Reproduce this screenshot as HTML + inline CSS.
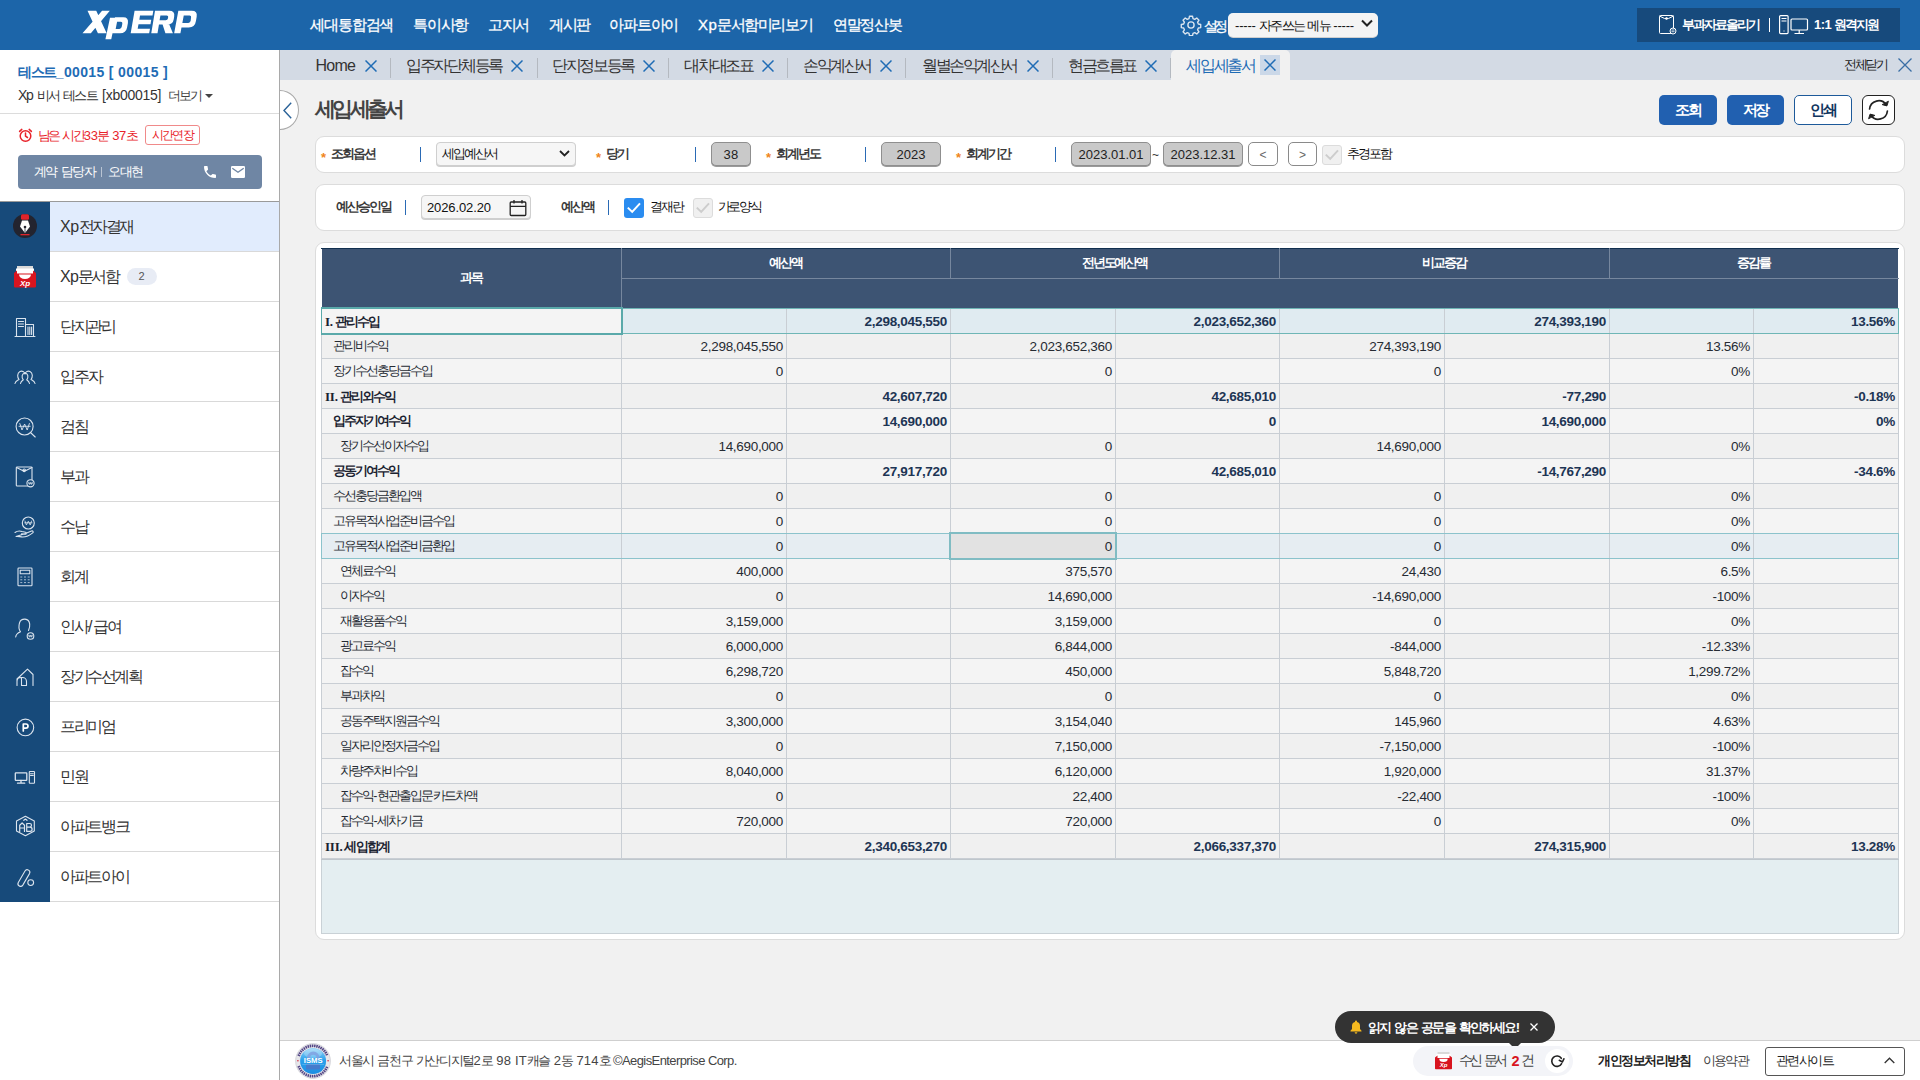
<!DOCTYPE html>
<html lang="ko"><head><meta charset="utf-8"><title>XpERP</title>
<style>
*{box-sizing:border-box;margin:0;padding:0}
html,body{width:1920px;height:1080px;overflow:hidden;background:#f1f1f1;font-family:"Liberation Sans",sans-serif;color:#333}
.a{position:absolute;white-space:nowrap}
.t{position:absolute;white-space:nowrap;line-height:1}
#hdr{left:0;top:0;width:1920px;height:50px;background:#1c65a9}
#tabs{left:280px;top:50px;width:1640px;height:30px;background:#d3dae4}
#side{left:0;top:50px;width:280px;height:1030px;background:#fff;border-right:1px solid #a9a9a9}
#foot{left:280px;top:1040px;width:1640px;height:40px;background:#fff;border-top:1px solid #cfcfcf}
.t{letter-spacing:var(--u,0px)}
.k{letter-spacing:calc(var(--u,0px) - 0.125em)}
.rm{font-family:"Liberation Serif",serif;font-size:1.04em;letter-spacing:-.2px;margin-right:-1.5px}
.hs .k{font-size:.92em}

</style></head>
<body>
<div class="a" id="hdr"></div>
<svg class="a" style="left:70px;top:0" width="160" height="50" viewBox="0 0 1920 600" fill="#fff"><path d="M210 130H315L440 400H335ZM385 130H478L250 400H150Z"/><path d="M480 212H550L495 470H425ZM540 208H640Q705 208 695 275L685 330Q672 400 600 400H500Z"/><path d="M775 130H1000L990 185H840L832 238H975L966 290H822L812 345H960L950 400H728Z"/><path d="M1020 130H1190Q1262 130 1250 200L1245 230Q1235 295 1165 295H1050ZM1020 130H1095L1050 400H975ZM1110 290H1190L1235 400H1145Z"/><path d="M1300 130H1460Q1532 130 1520 200L1512 250Q1500 330 1425 330H1335ZM1300 130H1375L1325 400H1250Z"/><path fill="#1c65a9" d="M565 262H610Q632 262 628 285L620 325Q615 347 592 347H548ZM1085 185H1160Q1182 185 1178 205L1175 222Q1171 242 1148 242H1075ZM1365 185H1435Q1457 185 1453 207L1448 250Q1444 275 1420 275H1348Z"/></svg>
<div class="t nav" style="left:310px;top:17px;font-size:15px;color:#fff;font-weight:normal;--u:0.75px;-webkit-text-stroke:0.3px #fff;"><span class="k">세대통합검색</span></div>
<div class="t nav" style="left:413px;top:17px;font-size:15px;color:#fff;font-weight:normal;--u:0.68px;-webkit-text-stroke:0.3px #fff;"><span class="k">특이사항</span></div>
<div class="t nav" style="left:488px;top:17px;font-size:15px;color:#fff;font-weight:normal;--u:0.60px;-webkit-text-stroke:0.3px #fff;"><span class="k">고지서</span></div>
<div class="t nav" style="left:549px;top:17px;font-size:15px;color:#fff;font-weight:normal;--u:0.60px;-webkit-text-stroke:0.3px #fff;"><span class="k">게시판</span></div>
<div class="t nav" style="left:609px;top:17px;font-size:15px;color:#fff;font-weight:normal;--u:0.72px;-webkit-text-stroke:0.3px #fff;"><span class="k">아파트아이</span></div>
<div class="t nav" style="left:698px;top:17px;font-size:15px;color:#fff;font-weight:normal;--u:0.43px;-webkit-text-stroke:0.3px #fff;">Xp<span class="k">문서함미리보기</span></div>
<div class="t nav" style="left:833px;top:17px;font-size:15px;color:#fff;font-weight:normal;--u:0.51px;-webkit-text-stroke:0.3px #fff;"><span class="k">연말정산봇</span></div>
<svg class="a" style="left:1180px;top:14px" width="22" height="22" viewBox="0 0 24 24" fill="none" stroke="#dbe5f0" stroke-width="1.5" stroke-linejoin="round"><circle cx="12" cy="12" r="3.4"/><path d="M10.3 2.5h3.4l.5 2.6 1.9.8 2.2-1.5 2.4 2.4-1.5 2.2.8 1.9 2.6.5v3.4l-2.6.5-.8 1.9 1.5 2.2-2.4 2.4-2.2-1.5-1.9.8-.5 2.6h-3.4l-.5-2.6-1.9-.8-2.2 1.5-2.4-2.4 1.5-2.2-.8-1.9-2.6-.5v-3.4l2.6-.5.8-1.9-1.5-2.2 2.4-2.4 2.2 1.5 1.9-.8z"/></svg>
<div class="t " style="left:1204px;top:18.5px;font-size:14px;color:#fff;font-weight:normal;--u:-2.65px;-webkit-text-stroke:0.3px #fff;"><span class="k">설정</span></div>
<div class="a" style="left:1228px;top:13px;width:150px;height:24px;background:#f4f4f4;border-radius:5px;box-shadow:0 1px 0 #cfcfcf"></div>
<div class="t " style="left:1235px;top:19px;font-size:13px;color:#111;font-weight:normal;--u:-0.18px;">----- <span class="k">자주쓰는</span> <span class="k">메뉴</span> -----</div>
<svg class="a" style="left:1361px;top:19px" width="12" height="9" viewBox="0 0 12 9" fill="none" stroke="#222" stroke-width="2"><path d="M1 1.5l5 5 5-5"/></svg>
<div class="a" style="left:1637px;top:8px;width:263px;height:34px;background:#174a7c"></div>
<svg class="a" style="left:1659px;top:15px" width="18" height="20" viewBox="0 0 18 20" fill="none" stroke="#fff" stroke-width="1"><rect x=".5" y=".5" width="14" height="18" rx="1"/><path d="M.5 1l5 2.5h4l5-2.5"/><circle cx="7.5" cy="3.5" r="1"/><circle cx="14" cy="16" r="3" fill="#174a7c"/><path d="M12.5 15h3M12.5 16.7h3" stroke-width=".8"/></svg>
<div class="t " style="left:1682px;top:18px;font-size:13px;color:#fff;font-weight:bold;--u:-0.39px;"><span class="k">부과자료올리기</span></div>
<div class="a" style="left:1769px;top:18px;width:1px;height:14px;background:#fff"></div>
<svg class="a" style="left:1779px;top:15px" width="30" height="20" viewBox="0 0 30 20" fill="none" stroke="#fff" stroke-width="1.2"><rect x=".6" y=".6" width="8.5" height="18" rx="1"/><path d="M2.5 3.5h5M2.5 6h5"/><path d="M4.5 16h1"/><rect x="12" y="4" width="16.5" height="11" rx="1"/><path d="M20.2 15v3M15.5 18.5h9.5"/></svg>
<div class="t " style="left:1814px;top:18px;font-size:13px;color:#fff;font-weight:bold;--u:-0.51px;">1:1 <span class="k">원격지원</span></div>
<div class="a" id="side"></div>
<div class="t " style="left:18px;top:65px;font-size:14px;color:#1f6cb5;font-weight:bold;--u:0.35px;"><span class="k">테스트</span>_00015 [ 00015 ]</div>
<div class="t " style="left:18px;top:88px;font-size:14px;color:#333;font-weight:normal;--u:-1.25px;">Xp</div>
<div class="t " style="left:37px;top:88.5px;font-size:13px;color:#333;font-weight:normal;--u:-0.44px;"><span class="k">비서</span></div>
<div class="t " style="left:63.3px;top:88.5px;font-size:13px;color:#333;font-weight:normal;--u:-0.27px;"><span class="k">테스트</span></div>
<div class="t " style="left:102px;top:88px;font-size:14px;color:#333;font-weight:normal;--u:-0.25px;">[xb00015]</div>
<div class="t " style="left:168px;top:88.5px;font-size:13px;color:#444;font-weight:normal;--u:-0.42px;"><span class="k">더보기</span></div>
<div class="a" style="left:205px;top:94px;width:0;height:0;border-left:4px solid transparent;border-right:4px solid transparent;border-top:4px solid #444"></div>
<div class="a" style="left:0;top:113px;width:279px;height:1px;background:#dcdcdc"></div>
<svg class="a" style="left:18px;top:128px" width="15" height="15" viewBox="0 0 15 15" fill="none" stroke="#e8232a" stroke-width="1.5" stroke-linecap="round"><circle cx="7.5" cy="8" r="5.3"/><path d="M7.5 5v3.2l2 1.3M1.6 3.4l2.2-2M13.4 3.4l-2.2-2"/></svg>
<div class="t " style="left:37.5px;top:128.5px;font-size:13px;color:#e8232a;font-weight:normal;--u:-1.03px;"><span class="k">남은</span></div>
<div class="t " style="left:62px;top:128.5px;font-size:13px;color:#e8232a;font-weight:normal;--u:-0.45px;"><span class="k">시간</span>33<span class="k">분</span></div>
<div class="t " style="left:112.3px;top:128.5px;font-size:13px;color:#e8232a;font-weight:normal;--u:-0.42px;">37<span class="k">초</span></div>
<div class="a" style="left:145px;top:125px;width:55px;height:20px;border:1px solid #f08a8a;border-radius:3px;background:#fff"></div>
<div class="t " style="left:152px;top:129px;font-size:12px;color:#e8232a;font-weight:normal;--u:-0.27px;"><span class="k">시간연장</span></div>
<div class="a" style="left:18px;top:155px;width:244px;height:34px;background:#6f86a4;border-radius:4px"></div>
<div class="t " style="left:34px;top:165px;font-size:13px;color:#fff;font-weight:normal;--u:0.09px;"><span class="k">계약</span> <span class="k">담당자</span></div>
<div class="a" style="left:101px;top:167px;width:1px;height:10px;background:#b9c4d3"></div>
<div class="t " style="left:108px;top:165px;font-size:13px;color:#fff;font-weight:normal;--u:0.32px;"><span class="k">오대현</span></div>
<svg class="a" style="left:202px;top:164px" width="16" height="16" viewBox="0 0 24 24" fill="#fff"><path d="M6.6 10.8c1.4 2.8 3.8 5.100 6.600 6.600l2.200-2.200c.3-.3.700-.400 1-.200 1.100.400 2.300.600 3.600.600.600 0 1 .400 1 1V20c0 .600-.400 1-1 1C10.600 21 3 13.400 3 4c0-.600.400-1 1-1h3.500c.600 0 1 .400 1 1 0 1.300.200 2.500.600 3.600.100.300 0 .700-.200 1l-2.300 2.200z"/></svg>
<svg class="a" style="left:231px;top:166px" width="14" height="12" viewBox="0 0 14 12"><rect width="14" height="12" rx="1.3" fill="#fff"/><path d="M1.300 2.200l5.700 4 5.700-4" fill="none" stroke="#6f86a4" stroke-width="1.400"/></svg>
<div class="a" style="left:0;top:201px;width:279px;height:1px;background:#9a9a9a"></div>
<div class="a" style="left:0;top:202px;width:50px;height:700px;background:#174a7a"></div>
<div class="a" style="left:50px;top:202px;width:229px;height:49px;background:#e1ecfd"></div>
<div class="a" style="left:50px;top:251px;width:229px;height:1px;background:#d9d9d9"></div>
<div class="t menu" style="left:60px;top:219px;font-size:16px;color:#333;font-weight:normal;--u:-0.45px;">Xp<span class="k">전자결재</span></div>
<div class="a" style="left:50px;top:301px;width:229px;height:1px;background:#d9d9d9"></div>
<div class="t menu" style="left:60px;top:269px;font-size:16px;color:#333;font-weight:normal;--u:-0.76px;">Xp<span class="k">문서함</span></div>
<div class="a" style="left:50px;top:351px;width:229px;height:1px;background:#d9d9d9"></div>
<div class="t menu" style="left:60px;top:319px;font-size:16px;color:#333;font-weight:normal;--u:-0.41px;"><span class="k">단지관리</span></div>
<div class="a" style="left:50px;top:401px;width:229px;height:1px;background:#d9d9d9"></div>
<div class="t menu" style="left:60px;top:369px;font-size:16px;color:#333;font-weight:normal;--u:-0.19px;"><span class="k">입주자</span></div>
<div class="a" style="left:50px;top:451px;width:229px;height:1px;background:#d9d9d9"></div>
<div class="t menu" style="left:60px;top:419px;font-size:16px;color:#333;font-weight:normal;--u:-0.29px;"><span class="k">검침</span></div>
<div class="a" style="left:50px;top:501px;width:229px;height:1px;background:#d9d9d9"></div>
<div class="t menu" style="left:60px;top:469px;font-size:16px;color:#333;font-weight:normal;--u:-0.29px;"><span class="k">부과</span></div>
<div class="a" style="left:50px;top:551px;width:229px;height:1px;background:#d9d9d9"></div>
<div class="t menu" style="left:60px;top:519px;font-size:16px;color:#333;font-weight:normal;--u:-0.29px;"><span class="k">수납</span></div>
<div class="a" style="left:50px;top:601px;width:229px;height:1px;background:#d9d9d9"></div>
<div class="t menu" style="left:60px;top:569px;font-size:16px;color:#333;font-weight:normal;--u:-0.29px;"><span class="k">회계</span></div>
<div class="a" style="left:50px;top:651px;width:229px;height:1px;background:#d9d9d9"></div>
<div class="t menu" style="left:60px;top:619px;font-size:16px;color:#333;font-weight:normal;--u:0.01px;"><span class="k">인사</span>/<span class="k">급여</span></div>
<div class="a" style="left:50px;top:701px;width:229px;height:1px;background:#d9d9d9"></div>
<div class="t menu" style="left:60px;top:669px;font-size:16px;color:#333;font-weight:normal;--u:-0.44px;"><span class="k">장기수선계획</span></div>
<div class="a" style="left:50px;top:751px;width:229px;height:1px;background:#d9d9d9"></div>
<div class="t menu" style="left:60px;top:719px;font-size:16px;color:#333;font-weight:normal;--u:-0.35px;"><span class="k">프리미엄</span></div>
<div class="a" style="left:50px;top:801px;width:229px;height:1px;background:#d9d9d9"></div>
<div class="t menu" style="left:60px;top:769px;font-size:16px;color:#333;font-weight:normal;--u:-0.29px;"><span class="k">민원</span></div>
<div class="a" style="left:50px;top:851px;width:229px;height:1px;background:#d9d9d9"></div>
<div class="t menu" style="left:60px;top:819px;font-size:16px;color:#333;font-weight:normal;--u:-0.34px;"><span class="k">아파트뱅크</span></div>
<div class="a" style="left:50px;top:901px;width:229px;height:1px;background:#d9d9d9"></div>
<div class="t menu" style="left:60px;top:869px;font-size:16px;color:#333;font-weight:normal;--u:-0.34px;"><span class="k">아파트아이</span></div>
<div class="a" style="left:127px;top:268px;width:30px;height:17px;border-radius:9px;background:#e8ecf5"></div>
<div class="t " style="left:138.5px;top:271px;font-size:11px;color:#555;font-weight:normal;">2</div>
<svg class="a" style="left:0;top:202px" width="50" height="50" viewBox="0 0 50 50" fill="none" stroke="#dbe4ee" stroke-width="1.1" stroke-linecap="round" stroke-linejoin="round"><circle cx="25" cy="24" r="12" fill="#23242f" stroke="none"/><rect x="21" y="12.300" width="8" height="5.500" rx="1.500" fill="#e0242b" stroke="none"/><path d="M22 18.500h6l2 6-5 6.500-5-6.500z" fill="#fff" stroke="none"/><circle cx="25" cy="25" r="1.300" fill="#23242f" stroke="none"/><path d="M25 26v4" stroke="#23242f" stroke-width=".8"/><rect x="20.500" y="32" width="9" height="1.300" fill="#e0242b" stroke="none"/></svg>
<svg class="a" style="left:0;top:252px" width="50" height="50" viewBox="0 0 50 50" fill="none" stroke="#dbe4ee" stroke-width="1.1" stroke-linecap="round" stroke-linejoin="round"><rect x="17" y="14" width="16" height="6" fill="#d9d9d9" stroke="none"/><rect x="16" y="16.500" width="18" height="6" fill="#fff" stroke="none"/><path d="M14 21l3-2.500v3h16v-3l3 2.500v13.500a1 1 0 0 1-1 1h-20a1 1 0 0 1-1-1z" fill="#d8141f" stroke="none"/><path d="M19 22.500h12a6 4.500 0 0 1-12 0z" fill="#fff" stroke="none"/><text x="25" y="33.800" font-family="Liberation Sans,sans-serif" font-size="8" font-weight="bold" font-style="italic" fill="#fff" stroke="none" text-anchor="middle">Xp</text></svg>
<svg class="a" style="left:0;top:302px" width="50" height="50" viewBox="0 0 50 50" fill="none" stroke="#dbe4ee" stroke-width="1.1" stroke-linecap="round" stroke-linejoin="round"><path d="M15 34.500h20M16.500 34.500v-18h9v18M25.500 22.500h8v12M18.500 19.500h5M18.500 22h5M18.500 24.500h5M28 25v7.500M29.800 25v7.500M31.600 25v7.500"/></svg>
<svg class="a" style="left:0;top:352px" width="50" height="50" viewBox="0 0 50 50" fill="none" stroke="#dbe4ee" stroke-width="1.1" stroke-linecap="round" stroke-linejoin="round"><path d="M15 31.500c.5-2.500 2.500-3 4-4-1.800-2-2-6.500 1-8 2-1 4.500 0 5 2.500M35 31.500c-.5-2.500-2.500-3-4-4 1.800-2 2-6.500-1-8-2-1-4.500 0-5 2.500M20.500 31.500c.4-2 1.500-2.700 2.800-3.700-2-2.500-1.600-6.300 1.700-6.800 3.300.5 3.700 4.300 1.700 6.800 1.300 1 2.400 1.700 2.800 3.700"/></svg>
<svg class="a" style="left:0;top:402px" width="50" height="50" viewBox="0 0 50 50" fill="none" stroke="#dbe4ee" stroke-width="1.1" stroke-linecap="round" stroke-linejoin="round"><circle cx="24.600" cy="24.500" r="8.500"/><path d="M31 31l4.200 4"/><path d="M19.800 21.500l2.200 6.500 2.600-6 2.600 6 2.200-6.500M19 24.300h11.200" stroke-width=".9"/></svg>
<svg class="a" style="left:0;top:452px" width="50" height="50" viewBox="0 0 50 50" fill="none" stroke="#dbe4ee" stroke-width="1.1" stroke-linecap="round" stroke-linejoin="round"><rect x="16.300" y="15" width="15.700" height="19" rx=".8"/><path d="M16.500 15.500l6 3h3.500l6-3"/><circle cx="24.200" cy="18.300" r="1.300"/><circle cx="30.500" cy="31.300" r="3.600" fill="#174a7a"/><path d="M28.700 30.200l.9 2.300.9-2 .9 2 .9-2.300M28.500 31.200h4" stroke-width=".7"/></svg>
<svg class="a" style="left:0;top:502px" width="50" height="50" viewBox="0 0 50 50" fill="none" stroke="#dbe4ee" stroke-width="1.1" stroke-linecap="round" stroke-linejoin="round"><circle cx="28.300" cy="21" r="6"/><path d="M25 19l1.400 4 1.900-3.800 1.900 3.800 1.400-4M24.600 20.800h7.400" stroke-width=".8"/><path d="M15 30.500c2-1.500 4.500-2 7-1l3.500.8c1.200.3 1 1.900-.3 1.800l-3.700-.3M25.500 31.500l6-2.500c1.500-.5 2.300 1 1.200 1.900-3 2.500-6.500 4.100-10 4.100-2.500 0-4.500-1-6.700-.500z"/></svg>
<svg class="a" style="left:0;top:552px" width="50" height="50" viewBox="0 0 50 50" fill="none" stroke="#dbe4ee" stroke-width="1.1" stroke-linecap="round" stroke-linejoin="round"><rect x="18" y="16" width="14" height="17.700" rx=".8"/><rect x="20.200" y="18.300" width="9.600" height="3.400"/><path d="M20.700 25h1.200M24.400 25h1.200M28.100 25h1.200M20.700 27.800h1.200M24.400 27.800h1.200M28.100 27.800h1.200M20.700 30.600h1.200M24.400 30.600h1.200M28.100 30.600h1.200" stroke-width="1" opacity=".75"/></svg>
<svg class="a" style="left:0;top:602px" width="50" height="50" viewBox="0 0 50 50" fill="none" stroke="#dbe4ee" stroke-width="1.1" stroke-linecap="round" stroke-linejoin="round"><path d="M15.700 35c.3-3 2-4 4.800-5.200-1.600-2.200-2-5.500-1-9 .8-2.500 3.200-3.800 5.500-3.700 2.800.2 4.400 2.200 4.700 5 .2 2.200-.2 4.400-1.200 6.400"/><circle cx="30.500" cy="34" r="3.300" fill="#174a7a"/><path d="M28.800 33l.8 2.200.9-1.900.9 1.900.8-2.200M28.600 33.900h3.800" stroke-width=".7"/></svg>
<svg class="a" style="left:0;top:652px" width="50" height="50" viewBox="0 0 50 50" fill="none" stroke="#dbe4ee" stroke-width="1.1" stroke-linecap="round" stroke-linejoin="round"><path d="M17 33.500v-6.500l10.500-9.800 5.500 5.300v11M17 33.500v-4a4 4 0 0 1 4-4h1.500a4 4 0 0 1 4 4v4h-5v-7.500" /></svg>
<svg class="a" style="left:0;top:702px" width="50" height="50" viewBox="0 0 50 50" fill="none" stroke="#dbe4ee" stroke-width="1.1" stroke-linecap="round" stroke-linejoin="round"><circle cx="25.400" cy="25.400" r="8.300"/><path d="M23.300 29v-7h2.600a2.100 2.100 0 0 1 0 4.200h-2.600" stroke-width="1.700" stroke="#fff"/></svg>
<svg class="a" style="left:0;top:752px" width="50" height="50" viewBox="0 0 50 50" fill="none" stroke="#dbe4ee" stroke-width="1.1" stroke-linecap="round" stroke-linejoin="round"><rect x="15.300" y="20.800" width="11.500" height="7.600" rx=".6" stroke-width="1.300"/><path d="M21 28.500v2.300M17.500 31.200h7.200" stroke-width="1.300"/><rect x="29.300" y="19.500" width="5.200" height="11.800" rx=".6"/><path d="M30.500 21.700h2.800M30.500 23.500h2.800"/></svg>
<svg class="a" style="left:0;top:802px" width="50" height="50" viewBox="0 0 50 50" fill="none" stroke="#dbe4ee" stroke-width="1.1" stroke-linecap="round" stroke-linejoin="round"><path d="M25.400 14.200l8.900 4.900v9.800l-8.900 4.900-8.900-4.900v-9.800z"/><path d="M19.700 29.500v-6.300l2.400-2.200 2.400 2.200v6.300M19.700 26h4.800M26.700 21.500h3a1.700 1.700 0 0 1 0 3.600h-3zM26.700 25.100h3.300a2 2 0 0 1 0 4.200h-3.300zM26.700 21.500v7.800M23.800 18.300l1.600-1.300 1.600 1.300" stroke-width="1.200"/></svg>
<svg class="a" style="left:0;top:852px" width="50" height="50" viewBox="0 0 50 50" fill="none" stroke="#dbe4ee" stroke-width="1.1" stroke-linecap="round" stroke-linejoin="round"><path d="M25 19l-6.700 11.500a2.600 2.600 0 0 0 4.500 2.600l6.700-11.500a2.600 2.600 0 0 0-4.500-2.600z"/><circle cx="30.700" cy="30.600" r="2.900"/></svg>
<div class="a" id="tabs"></div>
<div class="t tab" style="left:315.5px;top:57.5px;font-size:16px;color:#333;font-weight:normal;--u:-0.73px;">Home</div>
<svg class="a" style="left:365px;top:60px" width="12" height="12" viewBox="0 0 12 12" fill="none" stroke="#1f6cb5" stroke-width="1.5"><path d="M.5 .5L11.5 11.5M11.5 .5L.5 11.5"/></svg>
<div class="a" style="left:390px;top:58px;width:1px;height:20px;background:#b4b9c0"></div>
<div class="t tab" style="left:406px;top:57.5px;font-size:16px;color:#333;font-weight:normal;--u:-0.30px;"><span class="k">입주자단체등록</span></div>
<svg class="a" style="left:511px;top:60px" width="12" height="12" viewBox="0 0 12 12" fill="none" stroke="#1f6cb5" stroke-width="1.5"><path d="M.5 .5L11.5 11.5M11.5 .5L.5 11.5"/></svg>
<div class="a" style="left:537px;top:58px;width:1px;height:20px;background:#b4b9c0"></div>
<div class="t tab" style="left:552px;top:57.5px;font-size:16px;color:#333;font-weight:normal;--u:-0.35px;"><span class="k">단지정보등록</span></div>
<svg class="a" style="left:643px;top:60px" width="12" height="12" viewBox="0 0 12 12" fill="none" stroke="#1f6cb5" stroke-width="1.5"><path d="M.5 .5L11.5 11.5M11.5 .5L.5 11.5"/></svg>
<div class="a" style="left:668px;top:58px;width:1px;height:20px;background:#b4b9c0"></div>
<div class="t tab" style="left:684px;top:57.5px;font-size:16px;color:#333;font-weight:normal;--u:-0.21px;"><span class="k">대차대조표</span></div>
<svg class="a" style="left:762px;top:60px" width="12" height="12" viewBox="0 0 12 12" fill="none" stroke="#1f6cb5" stroke-width="1.5"><path d="M.5 .5L11.5 11.5M11.5 .5L.5 11.5"/></svg>
<div class="a" style="left:787px;top:58px;width:1px;height:20px;background:#b4b9c0"></div>
<div class="t tab" style="left:803px;top:57.5px;font-size:16px;color:#333;font-weight:normal;--u:-0.43px;"><span class="k">손익계산서</span></div>
<svg class="a" style="left:880px;top:60px" width="12" height="12" viewBox="0 0 12 12" fill="none" stroke="#1f6cb5" stroke-width="1.5"><path d="M.5 .5L11.5 11.5M11.5 .5L.5 11.5"/></svg>
<div class="a" style="left:905px;top:58px;width:1px;height:20px;background:#b4b9c0"></div>
<div class="t tab" style="left:922px;top:57.5px;font-size:16px;color:#333;font-weight:normal;--u:-0.45px;"><span class="k">월별손익계산서</span></div>
<svg class="a" style="left:1027px;top:60px" width="12" height="12" viewBox="0 0 12 12" fill="none" stroke="#1f6cb5" stroke-width="1.5"><path d="M.5 .5L11.5 11.5M11.5 .5L.5 11.5"/></svg>
<div class="a" style="left:1052px;top:58px;width:1px;height:20px;background:#b4b9c0"></div>
<div class="t tab" style="left:1068px;top:57.5px;font-size:16px;color:#333;font-weight:normal;--u:-0.43px;"><span class="k">현금흐름표</span></div>
<svg class="a" style="left:1145px;top:60px" width="12" height="12" viewBox="0 0 12 12" fill="none" stroke="#1f6cb5" stroke-width="1.5"><path d="M.5 .5L11.5 11.5M11.5 .5L.5 11.5"/></svg>
<div class="a" style="left:1171px;top:50px;width:119px;height:30px;background:#f1f1f1;border-radius:5px 5px 0 0"></div>
<div class="a" style="left:1170px;top:58px;width:1px;height:20px;background:#b4b9c0"></div>
<div class="t tab" style="left:1186px;top:57.5px;font-size:16px;color:#1f6cb5;font-weight:normal;--u:-0.21px;"><span class="k">세입세출서</span></div>
<div class="a" style="left:1260px;top:55px;width:20px;height:20px;background:#cbd8e8"></div>
<svg class="a" style="left:1264px;top:59px" width="12" height="12" viewBox="0 0 12 12" fill="none" stroke="#1f6cb5" stroke-width="1.5"><path d="M.5 .5L11.5 11.5M11.5 .5L.5 11.5"/></svg>
<div class="t " style="left:1844px;top:58px;font-size:13px;color:#222;font-weight:normal;--u:-0.68px;"><span class="k">전체닫기</span></div>
<svg class="a" style="left:1898px;top:58px" width="14" height="14" viewBox="0 0 14 14" fill="none" stroke="#3a6ea5" stroke-width="1.3"><path d="M.5 .5L13.5 13.5M13.5 .5L.5 13.5"/></svg>
<div class="a" style="left:261px;top:90px;width:38px;height:40px;overflow:hidden;clip-path:inset(0 0 0 19px)"><div style="position:absolute;left:0;top:0;width:38px;height:40px;border-radius:50%;background:#fff;border:1px solid #a9a9a9"></div></div>
<svg class="a" style="left:282.500px;top:101.500px" width="9" height="17" viewBox="0 0 9 17" fill="none" stroke="#2a6298" stroke-width="1.400"><path d="M8.200 .800L1 8.500l7.200 7.700"/></svg>
<div class="t title" style="left:315px;top:98px;font-size:21px;color:#444;font-weight:bold;--u:-1.04px;"><span class="k">세입세출서</span></div>
<div class="a" style="left:1659px;top:95px;width:58px;height:30px;background:#2160b0;border-radius:5px"></div>
<div class="t " style="left:1688px;transform:translateX(-50%);top:102px;font-size:15px;color:#fff;font-weight:bold;--u:-0.15px;"><span class="k">조회</span></div>
<div class="a" style="left:1727px;top:95px;width:57px;height:30px;background:#2160b0;border-radius:5px"></div>
<div class="t " style="left:1755.5px;transform:translateX(-50%);top:102px;font-size:15px;color:#fff;font-weight:bold;--u:-0.15px;"><span class="k">저장</span></div>
<div class="a" style="left:1794px;top:95px;width:58px;height:30px;background:#fff;border:1px solid #1d5a9a;border-radius:5px"></div>
<div class="t " style="left:1823px;transform:translateX(-50%);top:102px;font-size:15px;color:#12365f;font-weight:bold;--u:-0.15px;"><span class="k">인쇄</span></div>
<div class="a" style="left:1862px;top:95px;width:33px;height:30px;background:#fff;border:1px solid #222;border-radius:6px"></div>
<svg class="a" style="left:1866px;top:98px" width="25" height="24" viewBox="0 0 25 24" fill="none" stroke="#222" stroke-width="1.700" stroke-linecap="round" stroke-linejoin="round"><path d="M3.600 11a9.100 9.100 0 0 1 16.600-4.200M21.400 13a9.100 9.100 0 0 1-16.600 4.200"/><path d="M22.300 3.600l-1.400 4.300-4.400-1.200z" fill="#222" stroke-width="1"/><path d="M2.700 20.400l1.400-4.300 4.400 1.200z" fill="#222" stroke-width="1"/></svg>
<div class="a" style="left:315px;top:136px;width:1590px;height:37px;background:#fff;border:1px solid #dcdcdc;border-radius:9px"></div>
<div class="t " style="left:321px;top:151px;font-size:13px;color:#f08519;font-weight:bold;">*</div>
<div class="t " style="left:331px;top:148px;font-size:12.5px;color:#3a3a3a;font-weight:bold;--u:-0.47px;"><span class="k">조회옵션</span></div>
<div class="a" style="left:420px;top:147px;width:1.200px;height:15px;background:#2a6ab5"></div>
<div class="a" style="left:436px;top:142px;width:140px;height:24px;background:#f6f6f6;border:1px solid #cfcfcf;border-radius:4px;box-shadow:0 1px 0 #cfcfcf"></div>
<div class="t " style="left:442px;top:148px;font-size:12.5px;color:#111;font-weight:normal;--u:-0.47px;"><span class="k">세입예산서</span></div>
<svg class="a" style="left:559px;top:150px" width="11" height="8" viewBox="0 0 11 8" fill="none" stroke="#222" stroke-width="1.8"><path d="M1 1l4.500 4.500L10 1"/></svg>
<div class="t " style="left:596px;top:151px;font-size:13px;color:#f08519;font-weight:bold;">*</div>
<div class="t " style="left:606px;top:148px;font-size:12.5px;color:#3a3a3a;font-weight:bold;--u:-0.51px;"><span class="k">당기</span></div>
<div class="a" style="left:695px;top:147px;width:1.200px;height:15px;background:#2a6ab5"></div>
<div class="a" style="left:711px;top:142px;width:40px;height:24px;background:#c9c9c9;border:1px solid #8f8f8f;border-radius:5px;box-shadow:0 1px 0 #9a9a9a"></div>
<div class="t " style="left:731px;transform:translateX(-50%);top:147.5px;font-size:13px;color:#222;font-weight:normal;--u:0.31px;">38</div>
<div class="t " style="left:766px;top:151px;font-size:13px;color:#f08519;font-weight:bold;">*</div>
<div class="t " style="left:776px;top:148px;font-size:12.5px;color:#3a3a3a;font-weight:bold;--u:-0.47px;"><span class="k">회계년도</span></div>
<div class="a" style="left:865px;top:147px;width:1.200px;height:15px;background:#2a6ab5"></div>
<div class="a" style="left:881px;top:142px;width:60px;height:24px;background:#c9c9c9;border:1px solid #8f8f8f;border-radius:5px;box-shadow:0 1px 0 #9a9a9a"></div>
<div class="t " style="left:911px;transform:translateX(-50%);top:147.5px;font-size:13px;color:#222;font-weight:normal;--u:0.02px;">2023</div>
<div class="t " style="left:956px;top:151px;font-size:13px;color:#f08519;font-weight:bold;">*</div>
<div class="t " style="left:966px;top:148px;font-size:12.5px;color:#3a3a3a;font-weight:bold;--u:-0.47px;"><span class="k">회계기간</span></div>
<div class="a" style="left:1055px;top:147px;width:1.200px;height:15px;background:#2a6ab5"></div>
<div class="a" style="left:1071px;top:142px;width:80px;height:24px;background:#c9c9c9;border:1px solid #8f8f8f;border-radius:5px;box-shadow:0 1px 0 #9a9a9a"></div>
<div class="t " style="left:1111px;transform:translateX(-50%);top:147.5px;font-size:13px;color:#222;font-weight:normal;--u:-0.01px;">2023.01.01</div>
<div class="t " style="left:1152px;top:149px;font-size:12px;color:#333;font-weight:normal;">~</div>
<div class="a" style="left:1163px;top:142px;width:80px;height:24px;background:#c9c9c9;border:1px solid #8f8f8f;border-radius:5px;box-shadow:0 1px 0 #9a9a9a"></div>
<div class="t " style="left:1203px;transform:translateX(-50%);top:147.5px;font-size:13px;color:#222;font-weight:normal;--u:-0.01px;">2023.12.31</div>
<div class="a" style="left:1248px;top:142px;width:30px;height:24px;background:#fff;border:1px solid #8a8a8a;border-radius:5px"></div>
<div class="t " style="left:1263px;transform:translateX(-50%);top:149px;font-size:12px;color:#666;font-weight:normal;">&lt;</div>
<div class="a" style="left:1288px;top:142px;width:29px;height:24px;background:#fff;border:1px solid #8a8a8a;border-radius:5px"></div>
<div class="t " style="left:1302.5px;transform:translateX(-50%);top:149px;font-size:12px;color:#666;font-weight:normal;">&gt;</div>
<div class="a" style="left:1322px;top:145px;width:20px;height:20px;background:#f0f0f0;border:1px solid #dcdcdc;border-radius:3px"></div>
<svg class="a" style="left:1322px;top:145px" width="20" height="20" viewBox="0 0 20 20" fill="none" stroke="#cdcdcd" stroke-width="2"><path d="M3.800 9.600l4.400 4.300 7.800-8.600"/></svg>
<div class="t " style="left:1347px;top:148px;font-size:12.5px;color:#111;font-weight:normal;--u:-0.47px;"><span class="k">추경포함</span></div>
<div class="a" style="left:315px;top:184px;width:1590px;height:47px;background:#fff;border:1px solid #dcdcdc;border-radius:9px"></div>
<div class="t " style="left:336px;top:201px;font-size:12.5px;color:#3a3a3a;font-weight:bold;--u:-0.47px;"><span class="k">예산승인일</span></div>
<div class="a" style="left:405px;top:200px;width:1.200px;height:15px;background:#2a6ab5"></div>
<div class="a" style="left:421px;top:195px;width:110px;height:24px;background:#f6f6f6;border:1px solid #cfcfcf;border-radius:4px;box-shadow:0 1px 0 #cfcfcf"></div>
<div class="t " style="left:427px;top:201px;font-size:13px;color:#111;font-weight:normal;--u:-0.11px;">2026.02.20</div>
<svg class="a" style="left:509px;top:199px" width="18" height="18" viewBox="0 0 18 18" fill="none" stroke="#222" stroke-width="1.300"><rect x="1.200" y="3" width="15.600" height="13.500" rx="1"/><path d="M1.200 7.300h15.600M5 1v3.500M13 1v3.500"/></svg>
<div class="t " style="left:561px;top:201px;font-size:12.5px;color:#3a3a3a;font-weight:bold;--u:-0.49px;"><span class="k">예산액</span></div>
<div class="a" style="left:608px;top:200px;width:1.200px;height:15px;background:#2a6ab5"></div>
<div class="a" style="left:624px;top:198px;width:20px;height:20px;background:#2a8cf0;border-radius:3px"></div>
<svg class="a" style="left:624px;top:198px" width="20" height="20" viewBox="0 0 20 20" fill="none" stroke="#fff" stroke-width="2"><path d="M3.800 9.600l4.400 4.300 7.800-8.600"/></svg>
<div class="t " style="left:650px;top:201px;font-size:12.5px;color:#111;font-weight:normal;--u:-0.49px;"><span class="k">결재란</span></div>
<div class="a" style="left:693px;top:198px;width:20px;height:20px;background:#f0f0f0;border:1px solid #dcdcdc;border-radius:3px"></div>
<svg class="a" style="left:693px;top:198px" width="20" height="20" viewBox="0 0 20 20" fill="none" stroke="#cdcdcd" stroke-width="2"><path d="M3.800 9.600l4.400 4.300 7.800-8.600"/></svg>
<div class="t " style="left:717.5px;top:201px;font-size:12.5px;color:#111;font-weight:normal;--u:-0.47px;"><span class="k">가로양식</span></div>
<div class="a" style="left:315px;top:242px;width:1590px;height:698px;background:#fff;border:1px solid #dcdcdc;border-radius:9px"></div>
<div class="a" style="left:321px;top:308px;width:1578px;height:550px;background:repeating-linear-gradient(#f4f4f4 0,#f4f4f4 25px,#f0f0f0 25px,#f0f0f0 50px)"></div>
<div class="a" style="left:621px;top:308px;width:1278px;height:25px;background:#e0ebf1"></div>
<div class="a" style="left:321px;top:533px;width:1578px;height:26px;background:#e6edf2"></div>
<div class="a" style="left:950px;top:533px;width:165px;height:25px;background:#e2e2e2"></div>
<div class="a" style="left:321px;top:858px;width:1578px;height:76px;background:#e4eef1;border:1px solid #c9d1d6;border-top:none"></div>
<div class="a" style="left:321px;top:333px;width:1578px;height:1px;background:#c9ced4"></div><div class="a" style="left:321px;top:358px;width:1578px;height:1px;background:#c9ced4"></div><div class="a" style="left:321px;top:383px;width:1578px;height:1px;background:#c9ced4"></div><div class="a" style="left:321px;top:408px;width:1578px;height:1px;background:#c9ced4"></div><div class="a" style="left:321px;top:433px;width:1578px;height:1px;background:#c9ced4"></div><div class="a" style="left:321px;top:458px;width:1578px;height:1px;background:#c9ced4"></div><div class="a" style="left:321px;top:483px;width:1578px;height:1px;background:#c9ced4"></div><div class="a" style="left:321px;top:508px;width:1578px;height:1px;background:#c9ced4"></div><div class="a" style="left:321px;top:533px;width:1578px;height:1px;background:#c9ced4"></div><div class="a" style="left:321px;top:558px;width:1578px;height:1px;background:#c9ced4"></div><div class="a" style="left:321px;top:583px;width:1578px;height:1px;background:#c9ced4"></div><div class="a" style="left:321px;top:608px;width:1578px;height:1px;background:#c9ced4"></div><div class="a" style="left:321px;top:633px;width:1578px;height:1px;background:#c9ced4"></div><div class="a" style="left:321px;top:658px;width:1578px;height:1px;background:#c9ced4"></div><div class="a" style="left:321px;top:683px;width:1578px;height:1px;background:#c9ced4"></div><div class="a" style="left:321px;top:708px;width:1578px;height:1px;background:#c9ced4"></div><div class="a" style="left:321px;top:733px;width:1578px;height:1px;background:#c9ced4"></div><div class="a" style="left:321px;top:758px;width:1578px;height:1px;background:#c9ced4"></div><div class="a" style="left:321px;top:783px;width:1578px;height:1px;background:#c9ced4"></div><div class="a" style="left:321px;top:808px;width:1578px;height:1px;background:#c9ced4"></div><div class="a" style="left:321px;top:833px;width:1578px;height:1px;background:#c9ced4"></div><div class="a" style="left:321px;top:858px;width:1578px;height:1px;background:#c9ced4"></div>
<div class="a" style="left:321px;top:859px;width:1578px;height:1px;background:#bfc6cc"></div>
<div class="a" style="left:321px;top:308px;width:1px;height:550px;background:#c9ced4"></div>
<div class="a" style="left:621px;top:308px;width:1px;height:550px;background:#c9ced4"></div>
<div class="a" style="left:786px;top:308px;width:1px;height:550px;background:#c9ced4"></div>
<div class="a" style="left:950px;top:308px;width:1px;height:550px;background:#c9ced4"></div>
<div class="a" style="left:1115px;top:308px;width:1px;height:550px;background:#c9ced4"></div>
<div class="a" style="left:1279px;top:308px;width:1px;height:550px;background:#c9ced4"></div>
<div class="a" style="left:1444px;top:308px;width:1px;height:550px;background:#c9ced4"></div>
<div class="a" style="left:1609px;top:308px;width:1px;height:550px;background:#c9ced4"></div>
<div class="a" style="left:1753px;top:308px;width:1px;height:550px;background:#c9ced4"></div>
<div class="a" style="left:1898px;top:308px;width:1px;height:550px;background:#c9ced4"></div>
<div class="a" style="left:322px;top:249px;width:1576px;height:59px;background:#3d5473"></div>
<div class="a" style="left:321px;top:248px;width:1578px;height:1px;background:#12304f"></div>
<div class="a" style="left:621px;top:278px;width:1278px;height:1px;background:#76879e"></div>
<div class="a" style="left:621px;top:248px;width:1px;height:60px;background:#76879e"></div>
<div class="a" style="left:950px;top:248px;width:1px;height:30px;background:#76879e"></div>
<div class="a" style="left:1279px;top:248px;width:1px;height:30px;background:#76879e"></div>
<div class="a" style="left:1609px;top:248px;width:1px;height:30px;background:#76879e"></div>
<div class="t " style="left:471px;transform:translateX(-50%);top:272px;font-size:12.5px;color:#fff;font-weight:bold;--u:-0.51px;"><span class="k">과목</span></div>
<div class="t " style="left:785.5px;transform:translateX(-50%);top:257px;font-size:12.5px;color:#fff;font-weight:bold;--u:-0.49px;"><span class="k">예산액</span></div>
<div class="t " style="left:1114.5px;transform:translateX(-50%);top:257px;font-size:12.5px;color:#fff;font-weight:bold;--u:-0.46px;"><span class="k">전년도예산액</span></div>
<div class="t " style="left:1444px;transform:translateX(-50%);top:257px;font-size:12.5px;color:#fff;font-weight:bold;--u:-0.47px;"><span class="k">비교증감</span></div>
<div class="t " style="left:1753.5px;transform:translateX(-50%);top:257px;font-size:12.5px;color:#fff;font-weight:bold;--u:-0.49px;"><span class="k">증감률</span></div>
<div class="a" style="left:621px;top:308px;width:1278px;height:26px;border:1px solid #6fb6b6;border-left:none"></div>
<div class="a" style="left:321px;top:307px;width:302px;height:28px;border:2px solid #5aa9aa;border-left-width:1.500px"></div>
<div class="a" style="left:321px;top:533px;width:1578px;height:26px;border:1px solid #8cc3cc"></div>
<div class="a" style="left:949px;top:532px;width:168px;height:28px;border:2px solid #80bcc3"></div>
<div class="t " style="left:325px;top:315px;font-size:12.5px;color:#1a2230;font-weight:bold;--u:-0.25px;"><span class="rm">I.</span> <span class="k">관리수입</span></div>
<div class="t " style="right:973px;top:314.5px;font-size:13.5px;color:#1d3554;font-weight:bold;letter-spacing:-0.3px;">2,298,045,550</div>
<div class="t " style="right:644px;top:314.5px;font-size:13.5px;color:#1d3554;font-weight:bold;letter-spacing:-0.3px;">2,023,652,360</div>
<div class="t " style="right:314px;top:314.5px;font-size:13.5px;color:#1d3554;font-weight:bold;letter-spacing:-0.3px;">274,393,190</div>
<div class="t " style="right:25px;top:314.5px;font-size:13.5px;color:#1d3554;font-weight:bold;letter-spacing:-0.3px;">13.56%</div>
<div class="t " style="left:333px;top:340px;font-size:12.5px;color:#262b33;font-weight:normal;--u:-0.47px;"><span class="k">관리비수익</span></div>
<div class="t " style="right:1137px;top:339.5px;font-size:13.5px;color:#262b33;font-weight:normal;letter-spacing:-0.3px;">2,298,045,550</div>
<div class="t " style="right:808px;top:339.5px;font-size:13.5px;color:#262b33;font-weight:normal;letter-spacing:-0.3px;">2,023,652,360</div>
<div class="t " style="right:479px;top:339.5px;font-size:13.5px;color:#262b33;font-weight:normal;letter-spacing:-0.3px;">274,393,190</div>
<div class="t " style="right:170px;top:339.5px;font-size:13.5px;color:#262b33;font-weight:normal;letter-spacing:-0.3px;">13.56%</div>
<div class="t " style="left:333px;top:365px;font-size:12.5px;color:#262b33;font-weight:normal;--u:-0.45px;"><span class="k">장기수선충당금수입</span></div>
<div class="t " style="right:1137px;top:364.5px;font-size:13.5px;color:#262b33;font-weight:normal;letter-spacing:-0.3px;">0</div>
<div class="t " style="right:808px;top:364.5px;font-size:13.5px;color:#262b33;font-weight:normal;letter-spacing:-0.3px;">0</div>
<div class="t " style="right:479px;top:364.5px;font-size:13.5px;color:#262b33;font-weight:normal;letter-spacing:-0.3px;">0</div>
<div class="t " style="right:170px;top:364.5px;font-size:13.5px;color:#262b33;font-weight:normal;letter-spacing:-0.3px;">0%</div>
<div class="t " style="left:325px;top:390px;font-size:12.5px;color:#1a2230;font-weight:bold;--u:-0.22px;"><span class="rm">II.</span> <span class="k">관리외수익</span></div>
<div class="t " style="right:973px;top:389.5px;font-size:13.5px;color:#1d3554;font-weight:bold;letter-spacing:-0.3px;">42,607,720</div>
<div class="t " style="right:644px;top:389.5px;font-size:13.5px;color:#1d3554;font-weight:bold;letter-spacing:-0.3px;">42,685,010</div>
<div class="t " style="right:314px;top:389.5px;font-size:13.5px;color:#1d3554;font-weight:bold;letter-spacing:-0.3px;">-77,290</div>
<div class="t " style="right:25px;top:389.5px;font-size:13.5px;color:#1d3554;font-weight:bold;letter-spacing:-0.3px;">-0.18%</div>
<div class="t " style="left:333px;top:415px;font-size:12.5px;color:#1a2230;font-weight:bold;--u:-0.46px;"><span class="k">입주자기여수익</span></div>
<div class="t " style="right:973px;top:414.5px;font-size:13.5px;color:#1d3554;font-weight:bold;letter-spacing:-0.3px;">14,690,000</div>
<div class="t " style="right:644px;top:414.5px;font-size:13.5px;color:#1d3554;font-weight:bold;letter-spacing:-0.3px;">0</div>
<div class="t " style="right:314px;top:414.5px;font-size:13.5px;color:#1d3554;font-weight:bold;letter-spacing:-0.3px;">14,690,000</div>
<div class="t " style="right:25px;top:414.5px;font-size:13.5px;color:#1d3554;font-weight:bold;letter-spacing:-0.3px;">0%</div>
<div class="t " style="left:340px;top:440px;font-size:12.5px;color:#262b33;font-weight:normal;--u:-0.45px;"><span class="k">장기수선이자수입</span></div>
<div class="t " style="right:1137px;top:439.5px;font-size:13.5px;color:#262b33;font-weight:normal;letter-spacing:-0.3px;">14,690,000</div>
<div class="t " style="right:808px;top:439.5px;font-size:13.5px;color:#262b33;font-weight:normal;letter-spacing:-0.3px;">0</div>
<div class="t " style="right:479px;top:439.5px;font-size:13.5px;color:#262b33;font-weight:normal;letter-spacing:-0.3px;">14,690,000</div>
<div class="t " style="right:170px;top:439.5px;font-size:13.5px;color:#262b33;font-weight:normal;letter-spacing:-0.3px;">0%</div>
<div class="t " style="left:333px;top:465px;font-size:12.5px;color:#1a2230;font-weight:bold;--u:-0.46px;"><span class="k">공동기여수익</span></div>
<div class="t " style="right:973px;top:464.5px;font-size:13.5px;color:#1d3554;font-weight:bold;letter-spacing:-0.3px;">27,917,720</div>
<div class="t " style="right:644px;top:464.5px;font-size:13.5px;color:#1d3554;font-weight:bold;letter-spacing:-0.3px;">42,685,010</div>
<div class="t " style="right:314px;top:464.5px;font-size:13.5px;color:#1d3554;font-weight:bold;letter-spacing:-0.3px;">-14,767,290</div>
<div class="t " style="right:25px;top:464.5px;font-size:13.5px;color:#1d3554;font-weight:bold;letter-spacing:-0.3px;">-34.6%</div>
<div class="t " style="left:333px;top:490px;font-size:12.5px;color:#262b33;font-weight:normal;--u:-0.45px;"><span class="k">수선충당금환입액</span></div>
<div class="t " style="right:1137px;top:489.5px;font-size:13.5px;color:#262b33;font-weight:normal;letter-spacing:-0.3px;">0</div>
<div class="t " style="right:808px;top:489.5px;font-size:13.5px;color:#262b33;font-weight:normal;letter-spacing:-0.3px;">0</div>
<div class="t " style="right:479px;top:489.5px;font-size:13.5px;color:#262b33;font-weight:normal;letter-spacing:-0.3px;">0</div>
<div class="t " style="right:170px;top:489.5px;font-size:13.5px;color:#262b33;font-weight:normal;letter-spacing:-0.3px;">0%</div>
<div class="t " style="left:333px;top:515px;font-size:12.5px;color:#262b33;font-weight:normal;--u:-0.45px;"><span class="k">고유목적사업준비금수입</span></div>
<div class="t " style="right:1137px;top:514.5px;font-size:13.5px;color:#262b33;font-weight:normal;letter-spacing:-0.3px;">0</div>
<div class="t " style="right:808px;top:514.5px;font-size:13.5px;color:#262b33;font-weight:normal;letter-spacing:-0.3px;">0</div>
<div class="t " style="right:479px;top:514.5px;font-size:13.5px;color:#262b33;font-weight:normal;letter-spacing:-0.3px;">0</div>
<div class="t " style="right:170px;top:514.5px;font-size:13.5px;color:#262b33;font-weight:normal;letter-spacing:-0.3px;">0%</div>
<div class="t " style="left:333px;top:540px;font-size:12.5px;color:#262b33;font-weight:normal;--u:-0.45px;"><span class="k">고유목적사업준비금환입</span></div>
<div class="t " style="right:1137px;top:539.5px;font-size:13.5px;color:#262b33;font-weight:normal;letter-spacing:-0.3px;">0</div>
<div class="t " style="right:808px;top:539.5px;font-size:13.5px;color:#262b33;font-weight:normal;letter-spacing:-0.3px;">0</div>
<div class="t " style="right:479px;top:539.5px;font-size:13.5px;color:#262b33;font-weight:normal;letter-spacing:-0.3px;">0</div>
<div class="t " style="right:170px;top:539.5px;font-size:13.5px;color:#262b33;font-weight:normal;letter-spacing:-0.3px;">0%</div>
<div class="t " style="left:340px;top:565px;font-size:12.5px;color:#262b33;font-weight:normal;--u:-0.47px;"><span class="k">연체료수익</span></div>
<div class="t " style="right:1137px;top:564.5px;font-size:13.5px;color:#262b33;font-weight:normal;letter-spacing:-0.3px;">400,000</div>
<div class="t " style="right:808px;top:564.5px;font-size:13.5px;color:#262b33;font-weight:normal;letter-spacing:-0.3px;">375,570</div>
<div class="t " style="right:479px;top:564.5px;font-size:13.5px;color:#262b33;font-weight:normal;letter-spacing:-0.3px;">24,430</div>
<div class="t " style="right:170px;top:564.5px;font-size:13.5px;color:#262b33;font-weight:normal;letter-spacing:-0.3px;">6.5%</div>
<div class="t " style="left:340px;top:590px;font-size:12.5px;color:#262b33;font-weight:normal;--u:-0.47px;"><span class="k">이자수익</span></div>
<div class="t " style="right:1137px;top:589.5px;font-size:13.5px;color:#262b33;font-weight:normal;letter-spacing:-0.3px;">0</div>
<div class="t " style="right:808px;top:589.5px;font-size:13.5px;color:#262b33;font-weight:normal;letter-spacing:-0.3px;">14,690,000</div>
<div class="t " style="right:479px;top:589.5px;font-size:13.5px;color:#262b33;font-weight:normal;letter-spacing:-0.3px;">-14,690,000</div>
<div class="t " style="right:170px;top:589.5px;font-size:13.5px;color:#262b33;font-weight:normal;letter-spacing:-0.3px;">-100%</div>
<div class="t " style="left:340px;top:615px;font-size:12.5px;color:#262b33;font-weight:normal;--u:-0.46px;"><span class="k">재활용품수익</span></div>
<div class="t " style="right:1137px;top:614.5px;font-size:13.5px;color:#262b33;font-weight:normal;letter-spacing:-0.3px;">3,159,000</div>
<div class="t " style="right:808px;top:614.5px;font-size:13.5px;color:#262b33;font-weight:normal;letter-spacing:-0.3px;">3,159,000</div>
<div class="t " style="right:479px;top:614.5px;font-size:13.5px;color:#262b33;font-weight:normal;letter-spacing:-0.3px;">0</div>
<div class="t " style="right:170px;top:614.5px;font-size:13.5px;color:#262b33;font-weight:normal;letter-spacing:-0.3px;">0%</div>
<div class="t " style="left:340px;top:640px;font-size:12.5px;color:#262b33;font-weight:normal;--u:-0.47px;"><span class="k">광고료수익</span></div>
<div class="t " style="right:1137px;top:639.5px;font-size:13.5px;color:#262b33;font-weight:normal;letter-spacing:-0.3px;">6,000,000</div>
<div class="t " style="right:808px;top:639.5px;font-size:13.5px;color:#262b33;font-weight:normal;letter-spacing:-0.3px;">6,844,000</div>
<div class="t " style="right:479px;top:639.5px;font-size:13.5px;color:#262b33;font-weight:normal;letter-spacing:-0.3px;">-844,000</div>
<div class="t " style="right:170px;top:639.5px;font-size:13.5px;color:#262b33;font-weight:normal;letter-spacing:-0.3px;">-12.33%</div>
<div class="t " style="left:340px;top:665px;font-size:12.5px;color:#262b33;font-weight:normal;--u:-0.49px;"><span class="k">잡수익</span></div>
<div class="t " style="right:1137px;top:664.5px;font-size:13.5px;color:#262b33;font-weight:normal;letter-spacing:-0.3px;">6,298,720</div>
<div class="t " style="right:808px;top:664.5px;font-size:13.5px;color:#262b33;font-weight:normal;letter-spacing:-0.3px;">450,000</div>
<div class="t " style="right:479px;top:664.5px;font-size:13.5px;color:#262b33;font-weight:normal;letter-spacing:-0.3px;">5,848,720</div>
<div class="t " style="right:170px;top:664.5px;font-size:13.5px;color:#262b33;font-weight:normal;letter-spacing:-0.3px;">1,299.72%</div>
<div class="t " style="left:340px;top:690px;font-size:12.5px;color:#262b33;font-weight:normal;--u:-0.47px;"><span class="k">부과차익</span></div>
<div class="t " style="right:1137px;top:689.5px;font-size:13.5px;color:#262b33;font-weight:normal;letter-spacing:-0.3px;">0</div>
<div class="t " style="right:808px;top:689.5px;font-size:13.5px;color:#262b33;font-weight:normal;letter-spacing:-0.3px;">0</div>
<div class="t " style="right:479px;top:689.5px;font-size:13.5px;color:#262b33;font-weight:normal;letter-spacing:-0.3px;">0</div>
<div class="t " style="right:170px;top:689.5px;font-size:13.5px;color:#262b33;font-weight:normal;letter-spacing:-0.3px;">0%</div>
<div class="t " style="left:340px;top:715px;font-size:12.5px;color:#262b33;font-weight:normal;--u:-0.45px;"><span class="k">공동주택지원금수익</span></div>
<div class="t " style="right:1137px;top:714.5px;font-size:13.5px;color:#262b33;font-weight:normal;letter-spacing:-0.3px;">3,300,000</div>
<div class="t " style="right:808px;top:714.5px;font-size:13.5px;color:#262b33;font-weight:normal;letter-spacing:-0.3px;">3,154,040</div>
<div class="t " style="right:479px;top:714.5px;font-size:13.5px;color:#262b33;font-weight:normal;letter-spacing:-0.3px;">145,960</div>
<div class="t " style="right:170px;top:714.5px;font-size:13.5px;color:#262b33;font-weight:normal;letter-spacing:-0.3px;">4.63%</div>
<div class="t " style="left:340px;top:740px;font-size:12.5px;color:#262b33;font-weight:normal;--u:-0.45px;"><span class="k">일자리안정자금수입</span></div>
<div class="t " style="right:1137px;top:739.5px;font-size:13.5px;color:#262b33;font-weight:normal;letter-spacing:-0.3px;">0</div>
<div class="t " style="right:808px;top:739.5px;font-size:13.5px;color:#262b33;font-weight:normal;letter-spacing:-0.3px;">7,150,000</div>
<div class="t " style="right:479px;top:739.5px;font-size:13.5px;color:#262b33;font-weight:normal;letter-spacing:-0.3px;">-7,150,000</div>
<div class="t " style="right:170px;top:739.5px;font-size:13.5px;color:#262b33;font-weight:normal;letter-spacing:-0.3px;">-100%</div>
<div class="t " style="left:340px;top:765px;font-size:12.5px;color:#262b33;font-weight:normal;--u:-0.46px;"><span class="k">차량주차비수입</span></div>
<div class="t " style="right:1137px;top:764.5px;font-size:13.5px;color:#262b33;font-weight:normal;letter-spacing:-0.3px;">8,040,000</div>
<div class="t " style="right:808px;top:764.5px;font-size:13.5px;color:#262b33;font-weight:normal;letter-spacing:-0.3px;">6,120,000</div>
<div class="t " style="right:479px;top:764.5px;font-size:13.5px;color:#262b33;font-weight:normal;letter-spacing:-0.3px;">1,920,000</div>
<div class="t " style="right:170px;top:764.5px;font-size:13.5px;color:#262b33;font-weight:normal;letter-spacing:-0.3px;">31.37%</div>
<div class="t " style="left:340px;top:790px;font-size:12.5px;color:#262b33;font-weight:normal;--u:-0.35px;"><span class="k">잡수익</span>-<span class="k">현관출입문카드차액</span></div>
<div class="t " style="right:1137px;top:789.5px;font-size:13.5px;color:#262b33;font-weight:normal;letter-spacing:-0.3px;">0</div>
<div class="t " style="right:808px;top:789.5px;font-size:13.5px;color:#262b33;font-weight:normal;letter-spacing:-0.3px;">22,400</div>
<div class="t " style="right:479px;top:789.5px;font-size:13.5px;color:#262b33;font-weight:normal;letter-spacing:-0.3px;">-22,400</div>
<div class="t " style="right:170px;top:789.5px;font-size:13.5px;color:#262b33;font-weight:normal;letter-spacing:-0.3px;">-100%</div>
<div class="t " style="left:340px;top:815px;font-size:12.5px;color:#262b33;font-weight:normal;--u:-0.29px;"><span class="k">잡수익</span>-<span class="k">세차기금</span></div>
<div class="t " style="right:1137px;top:814.5px;font-size:13.5px;color:#262b33;font-weight:normal;letter-spacing:-0.3px;">720,000</div>
<div class="t " style="right:808px;top:814.5px;font-size:13.5px;color:#262b33;font-weight:normal;letter-spacing:-0.3px;">720,000</div>
<div class="t " style="right:479px;top:814.5px;font-size:13.5px;color:#262b33;font-weight:normal;letter-spacing:-0.3px;">0</div>
<div class="t " style="right:170px;top:814.5px;font-size:13.5px;color:#262b33;font-weight:normal;letter-spacing:-0.3px;">0%</div>
<div class="t " style="left:325px;top:840px;font-size:12.5px;color:#1a2230;font-weight:bold;--u:-0.16px;"><span class="rm">III.</span> <span class="k">세입합계</span></div>
<div class="t " style="right:973px;top:839.5px;font-size:13.5px;color:#1d3554;font-weight:bold;letter-spacing:-0.3px;">2,340,653,270</div>
<div class="t " style="right:644px;top:839.5px;font-size:13.5px;color:#1d3554;font-weight:bold;letter-spacing:-0.3px;">2,066,337,370</div>
<div class="t " style="right:314px;top:839.5px;font-size:13.5px;color:#1d3554;font-weight:bold;letter-spacing:-0.3px;">274,315,900</div>
<div class="t " style="right:25px;top:839.5px;font-size:13.5px;color:#1d3554;font-weight:bold;letter-spacing:-0.3px;">13.28%</div>
<div class="a" id="foot"></div>
<svg class="a" style="left:295px;top:1043px" width="36" height="36" viewBox="0 0 36 36"><defs><linearGradient id="gi" x1="0" y1="0" x2="0" y2="1"><stop offset="0" stop-color="#9ad6f8"/><stop offset=".45" stop-color="#2ba2ec"/><stop offset="1" stop-color="#1c8de2"/></linearGradient></defs><circle cx="18" cy="18" r="17.400" fill="#e6e6ea" stroke="#cfcfd6" stroke-width=".800"/><path d="M3.700 13a15.100 15.100 0 0 1 28.600 0M3.700 23a15.100 15.100 0 0 0 28.600 0" fill="none" stroke="#43337a" stroke-width="2.700" stroke-dasharray="1.500 .700" opacity=".9"/><circle cx="2.900" cy="17.800" r=".800" fill="#d9243a"/><circle cx="33.100" cy="17.800" r=".800" fill="#d9243a"/><circle cx="18.100" cy="18" r="13" fill="url(#gi)"/><ellipse cx="18" cy="10.500" rx="9" ry="4.500" fill="#fff" opacity=".25"/><path d="M13.600 17V14.900a4.700 4.700 0 0 1 9.400 0V17" fill="none" stroke="#7f9fe0" stroke-width="3.200" opacity=".8"/><rect x="11" y="21.200" width="14" height="5.300" rx="1" fill="#4d74c6" opacity=".8"/><path d="M7.200 21.800h21.800" stroke="#fff" stroke-width=".400" opacity=".7"/><text x="18.200" y="19.800" font-family="Liberation Sans,sans-serif" font-size="6.600" font-weight="bold" fill="#fff" text-anchor="middle" textLength="18.700" lengthAdjust="spacingAndGlyphs">ISMS</text></svg>
<div class="t " style="left:339px;top:1054px;font-size:13px;color:#444;font-weight:normal;--u:0.17px;"><span class="k">서울시</span> <span class="k">금천구</span> <span class="k">가산디지털</span>2<span class="k">로</span> 98 IT<span class="k">캐슬</span> 2<span class="k">동</span> 714<span class="k">호</span></div>
<div class="t " style="left:613px;top:1054px;font-size:13px;color:#444;font-weight:normal;--u:-0.59px;">©AegisEnterprise Corp.</div>
<div class="a" style="left:1335px;top:1011px;width:220px;height:32px;background:#333;border-radius:16px"></div>
<div class="a" style="left:1508px;top:1042px;width:0;height:0;border-left:7px solid transparent;border-right:7px solid transparent;border-top:7px solid #333"></div>
<svg class="a" style="left:1350px;top:1020px" width="12" height="14" viewBox="0 0 12 14" fill="#f5b91f"><path d="M6 .5a1 1 0 0 1 1 1v.4a4 4 0 0 1 3 3.900v3.200l1.500 1.800v.700h-11v-.700l1.500-1.800v-3.200a4 4 0 0 1 3-3.900v-.4a1 1 0 0 1 1-1z"/><path d="M4.600 12.300h2.800a1.400 1.400 0 0 1-2.800 0z"/></svg>
<div class="t " style="left:1368px;top:1021px;font-size:13px;color:#fff;font-weight:bold;--u:0.02px;"><span class="k">읽지</span> <span class="k">않은</span> <span class="k">공문을</span> <span class="k">확인하세요</span>!</div>
<svg class="a" style="left:1530px;top:1023px" width="8" height="8" viewBox="0 0 8 8" fill="none" stroke="#fff" stroke-width="1.300"><path d="M.500 .500l7 7M7.500 .500l-7 7"/></svg>
<div class="a" style="left:1413px;top:1046px;width:160px;height:30px;background:#f3f4f8;border-radius:15px"></div>
<svg class="a" style="left:1435px;top:1052px" width="17" height="18" viewBox="0 0 17 18"><rect x="2.500" y="0" width="12" height="5" fill="#d9d9d9"/><rect x="1.500" y="2" width="14" height="5" fill="#fff"/><path d="M0 5.500l2.500-2v2.500h12v-2.500l2.500 2v11a.800.800 0 0 1-.800.800h-15.400a.800.800 0 0 1-.800-.800z" fill="#d8141f"/><path d="M4.300 6.800h8.400a4.200 3.300 0 0 1-8.400 0z" fill="#fff"/><text x="8.500" y="15.300" font-family="Liberation Sans,sans-serif" font-size="6" font-weight="bold" font-style="italic" fill="#fff" text-anchor="middle">Xp</text></svg>
<div class="t " style="left:1459px;top:1054px;font-size:13.5px;color:#444;font-weight:normal;--u:-1.84px;"><span class="k">수신</span></div>
<div class="t " style="left:1483.5px;top:1054px;font-size:13.5px;color:#444;font-weight:normal;--u:-1.84px;"><span class="k">문서</span></div>
<div class="t " style="left:1511.5px;top:1053.5px;font-size:14.5px;color:#d8141f;font-weight:bold;">2</div>
<div class="t " style="left:1521px;top:1054px;font-size:13.5px;color:#444;font-weight:normal;">건</div>
<div class="a" style="left:1545px;top:1049px;width:24px;height:24px;background:#fff;border-radius:50%"></div>
<svg class="a" style="left:1549px;top:1053px" width="16" height="16" viewBox="0 0 16 16" fill="none" stroke="#222" stroke-width="1.600" stroke-linecap="round" stroke-linejoin="round"><path d="M12.600 10.600a5.200 5.200 0 1 1-.300-5.300"/><path d="M10.300 7.300l3.100 1.700 1.500-3.200"/></svg>
<div class="t " style="left:1598px;top:1054px;font-size:13px;color:#222;font-weight:bold;--u:0.13px;"><span class="k">개인정보처리방침</span></div>
<div class="t " style="left:1703px;top:1054px;font-size:13px;color:#444;font-weight:normal;--u:-0.14px;"><span class="k">이용약관</span></div>
<div class="a" style="left:1765px;top:1047px;width:140px;height:29px;background:#fff;border:1px solid #555;border-radius:3px"></div>
<div class="t " style="left:1776px;top:1054px;font-size:13px;color:#222;font-weight:normal;--u:0.03px;"><span class="k">관련사이트</span></div>
<svg class="a" style="left:1884px;top:1057px" width="11" height="7" viewBox="0 0 11 7" fill="none" stroke="#333" stroke-width="1.300"><path d="M.700 6l4.800-4.800 4.800 4.800"/></svg>
</body></html>
